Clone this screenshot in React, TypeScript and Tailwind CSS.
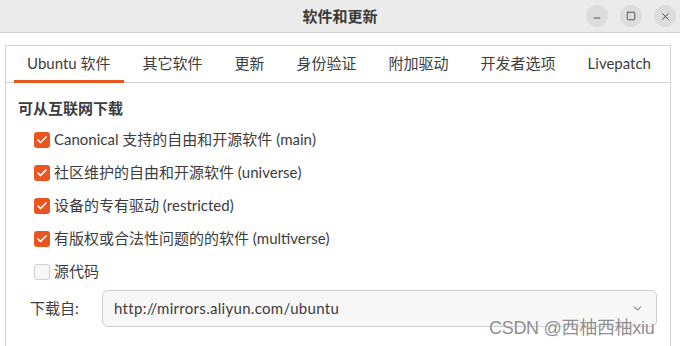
import { Check, ChevronDown, Minus, Square, X } from "lucide-react";

const font = { fontFamily: 'Lato, "Noto Sans CJK SC", sans-serif' };

const tabs = ["Ubuntu 软件", "其它软件", "更新", "身份验证", "附加驱动", "开发者选项", "Livepatch"];

const sources = [
  { label: "Canonical 支持的自由和开源软件 (main)", on: true },
  { label: "社区维护的自由和开源软件 (universe)", on: true },
  { label: "设备的专有驱动 (restricted)", on: true },
  { label: "有版权或合法性问题的的软件 (multiverse)", on: true },
  { label: "源代码", on: false },
];

function Box({ on }: { on: boolean }) {
  if (on) {
    return (
      <span className="flex h-4 w-4 shrink-0 items-center justify-center rounded-[3px] bg-[#e95420]">
        <Check size={12} strokeWidth={3.5} className="text-white" />
      </span>
    );
  }
  return <span className="h-4 w-4 shrink-0 rounded-[3px] border border-[#cfcfcf] bg-[#f6f6f6]" />;
}

export default function App() {
  return (
    <div style={font} className="relative h-[346px] w-[680px] overflow-hidden bg-white text-[15px] text-[#3c3c3c]">
      {/* title bar */}
      <div className="relative flex h-[33px] items-center justify-center border-b border-[#d2d2d2] bg-[#ebebeb]">
        <span className="font-bold text-[#3a3a3a]">软件和更新</span>
        <div className="absolute right-[4px] top-[5px] flex gap-[12px]">
          <span className="flex h-[22px] w-[22px] items-end justify-center rounded-full bg-[#dcdcdc] pb-[4px]">
            <Minus size={10} strokeWidth={2} />
          </span>
          <span className="flex h-[22px] w-[22px] items-center justify-center rounded-full bg-[#dcdcdc]">
            <Square size={10} strokeWidth={2} />
          </span>
          <span className="flex h-[22px] w-[22px] items-center justify-center rounded-full bg-[#dcdcdc]">
            <X size={11} strokeWidth={2} />
          </span>
        </div>
      </div>

      <div className="pl-[5px] pt-[12px]">
        <div className="h-[320px] w-[666px] border border-[#d4d4d4] bg-white">
          {/* tabs */}
          <div className="flex h-[37px] gap-[6px] border-b border-[#d4d4d4] pl-[8px]">
            {tabs.map((t, i) => (
              <div
                key={t}
                className={
                  "flex shrink-0 items-center whitespace-nowrap px-[13px] pb-[2px] " +
                  (i === 0 ? "-mb-px border-b-[3px] border-[#e95420] pt-[3px]" : "")
                }
              >
                {t}
              </div>
            ))}
          </div>

          <div className="pl-[12px] pt-[14px]">
            <div className="font-bold">可从互联网下载</div>
            <div className="mt-[9px] flex flex-col gap-[11px] pl-[16px]">
              {sources.map((s) => (
                <label key={s.label} className="flex h-[22px] items-center gap-[4px]">
                  <Box on={s.on} />
                  <span>{s.label}</span>
                </label>
              ))}
            </div>
            <div className="mt-[7px] flex items-center pl-[12px]">
              <span className="w-[72px]">下载自:</span>
              <div className="flex h-[37px] w-[555px] items-center justify-between rounded-[6px] border border-[#cdcdcd] bg-[#f7f7f7] pl-[11px] pr-[12px]">
                <span className="tracking-[0.3px]">http://mirrors.aliyun.com/ubuntu</span>
                <ChevronDown size={13} strokeWidth={1.6} />
              </div>
            </div>
          </div>
        </div>
      </div>

      <div
        className="absolute left-[489px] top-[315px] text-[18px] tracking-[-0.3px] text-[#8f8f8f]"
        style={{ fontFamily: '"Liberation Sans", "Noto Sans CJK SC", sans-serif', textShadow: "0 0 2px #fff" }}
      >
        CSDN @西柚西柚xiu
      </div>
    </div>
  );
}
